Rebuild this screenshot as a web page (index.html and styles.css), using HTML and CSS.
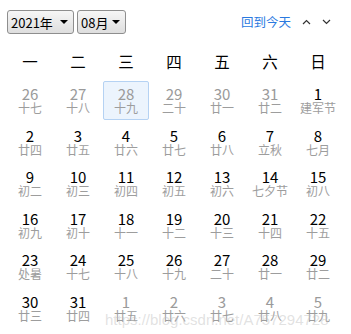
FILE: index.html
```html
<!DOCTYPE html>
<html lang="zh-CN">
<head>
<meta charset="utf-8">
<title>日历</title>
<link rel="stylesheet" href="styles.css">
</head>
<body>
<div class="cal">
  <div class="toolbar">
    <div class="sel sel-year">2021年<span class="tri"></span></div>
    <div class="sel sel-month">08月<span class="tri"></span></div>
    <div class="spacer"></div>
    <a class="today">回到今天</a>
    <span class="nav"><svg width="9" height="6" viewBox="0 0 9 6"><path d="M1 5 L4.5 1.5 L8 5" fill="none" stroke="#333" stroke-width="1.2"/></svg></span>
    <span class="nav"><svg width="9" height="6" viewBox="0 0 9 6"><path d="M1 1 L4.5 4.5 L8 1" fill="none" stroke="#333" stroke-width="1.2"/></svg></span>
  </div>
  <div class="week">
    <span>一</span><span>二</span><span>三</span><span>四</span><span>五</span><span>六</span><span>日</span>
  </div>
  <div class="days">
    <div class="day other"><b>26</b><i>十七</i></div>
    <div class="day other"><b>27</b><i>十八</i></div>
    <div class="day other sel-day"><b>28</b><i>十九</i></div>
    <div class="day other"><b>29</b><i>二十</i></div>
    <div class="day other"><b>30</b><i>廿一</i></div>
    <div class="day other"><b>31</b><i>廿二</i></div>
    <div class="day"><b>1</b><i>建军节</i></div>

    <div class="day"><b>2</b><i>廿四</i></div>
    <div class="day"><b>3</b><i>廿五</i></div>
    <div class="day"><b>4</b><i>廿六</i></div>
    <div class="day"><b>5</b><i>廿七</i></div>
    <div class="day"><b>6</b><i>廿八</i></div>
    <div class="day"><b>7</b><i>立秋</i></div>
    <div class="day"><b>8</b><i>七月</i></div>

    <div class="day"><b>9</b><i>初二</i></div>
    <div class="day"><b>10</b><i>初三</i></div>
    <div class="day"><b>11</b><i>初四</i></div>
    <div class="day"><b>12</b><i>初五</i></div>
    <div class="day"><b>13</b><i>初六</i></div>
    <div class="day"><b>14</b><i>七夕节</i></div>
    <div class="day"><b>15</b><i>初八</i></div>

    <div class="day"><b>16</b><i>初九</i></div>
    <div class="day"><b>17</b><i>初十</i></div>
    <div class="day"><b>18</b><i>十一</i></div>
    <div class="day"><b>19</b><i>十二</i></div>
    <div class="day"><b>20</b><i>十三</i></div>
    <div class="day"><b>21</b><i>十四</i></div>
    <div class="day"><b>22</b><i>十五</i></div>

    <div class="day"><b>23</b><i>处暑</i></div>
    <div class="day"><b>24</b><i>十七</i></div>
    <div class="day"><b>25</b><i>十八</i></div>
    <div class="day"><b>26</b><i>十九</i></div>
    <div class="day"><b>27</b><i>二十</i></div>
    <div class="day"><b>28</b><i>廿一</i></div>
    <div class="day"><b>29</b><i>廿二</i></div>

    <div class="day"><b>30</b><i>廿三</i></div>
    <div class="day"><b>31</b><i>廿四</i></div>
    <div class="day other"><b>1</b><i>廿五</i></div>
    <div class="day other"><b>2</b><i>廿六</i></div>
    <div class="day other"><b>3</b><i>廿七</i></div>
    <div class="day other"><b>4</b><i>廿八</i></div>
    <div class="day other"><b>5</b><i>廿九</i></div>
  </div>
  <div class="watermark">https://blog.csdn.net/A757294728</div>
</div>
</body>
</html>
```

FILE: styles.css
```css
html, body {
  margin: 0;
  padding: 0;
  background: #fff;
}
body {
  font-family: "Noto Sans CJK SC", "Noto Sans", sans-serif;
  color: #000;
}
.cal {
  position: relative;
  width: 351px;
  height: 334px;
  overflow: hidden;
}
.toolbar {
  display: flex;
  align-items: center;
  padding: 10px 0 0 7px;
  height: 24px;
}
.sel {
  box-sizing: border-box;
  height: 24px;
  border: 1px solid #8e8e8e;
  border-radius: 3px;
  background: linear-gradient(#f6f6f6, #dedede);
  font-size: 13px;
  line-height: 21px;
  padding-left: 3px;
  display: flex;
  align-items: center;
  justify-content: space-between;
  padding-right: 5px;
}
.sel-year { width: 67px; margin-right: 3px; }
.sel-month { width: 49px; }
.tri {
  width: 0;
  height: 0;
  border-left: 4px solid transparent;
  border-right: 4px solid transparent;
  border-top: 4px solid #000;
}
.spacer { flex: 1; }
.today {
  color: #2a79df;
  font-size: 12.5px;
  line-height: 24px;
  margin-right: 5px;
}
.nav {
  display: inline-flex;
  width: 20px;
  justify-content: center;
  align-items: center;
}
.nav:last-child { margin-right: 15px; }
.week {
  display: grid;
  grid-template-columns: repeat(7, 48px);
  padding-left: 6px;
  margin-top: 8px;
  height: 38px;
  align-items: center;
  font-size: 15.5px;
  text-align: center;
}
.days {
  display: grid;
  grid-template-columns: repeat(7, 48px);
  grid-auto-rows: 41.6px;
  padding-left: 6px;
}
.day {
  margin: 1px;
  box-sizing: border-box;
  border: 1px solid transparent;
  border-radius: 2px;
  display: flex;
  flex-direction: column;
  align-items: center;
  justify-content: center;
  height: 39px;
}
.day b {
  font-weight: normal;
  font-size: 15px;
  line-height: 15px;
  color: #000;
}
.day i {
  font-style: normal;
  font-size: 12px;
  line-height: 14px;
  color: #9d9d9d;
}
.day.other b { color: #9a9a9a; }
.day.other i { color: #9d9d9d; }
.sel-day {
  border-color: #b5d2f3;
  background: #ecf4fd;
}
.watermark {
  position: absolute;
  left: 105px;
  top: 311px;
  font-family: "Liberation Sans", sans-serif;
  font-size: 15px;
  color: rgba(190, 190, 190, 0.45);
  white-space: nowrap;
  pointer-events: none;
}
```
